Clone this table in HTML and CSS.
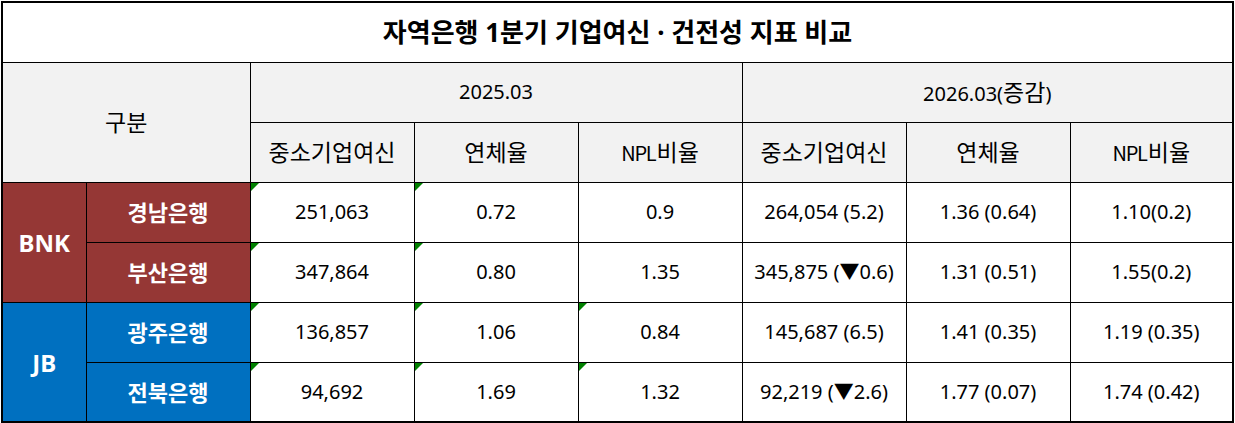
FILE: index.html
```html
<!DOCTYPE html>
<html lang="ko">
<head>
<meta charset="utf-8">
<link rel="stylesheet" href="styles.css">
</head>
<body>
<table class="sheet">
  <colgroup>
    <col class="c-grp"><col class="c-bank">
    <col class="c-val"><col class="c-val"><col class="c-val">
    <col class="c-val"><col class="c-val6"><col class="c-val7">
  </colgroup>
  <tr class="row">
    <td class="title" colspan="8">자역은행 1분기 기업여신 · 건전성 지표 비교</td>
  </tr>
  <tr class="row">
    <td class="head ko" colspan="2" rowspan="2">구분</td>
    <td class="head" colspan="3">2025.03</td>
    <td class="head" colspan="3">2026.03(<span class="ko">증감</span>)</td>
  </tr>
  <tr class="row">
    <td class="head ko">중소기업여신</td>
    <td class="head ko">연체율</td>
    <td class="head"><span class="npl">NPL</span><span class="ko">비율</span></td>
    <td class="head ko">중소기업여신</td>
    <td class="head ko">연체율</td>
    <td class="head"><span class="npl">NPL</span><span class="ko">비율</span></td>
  </tr>
  <tr class="row">
    <td class="grp bnk" rowspan="2">BNK</td>
    <td class="bank bnk">경남은행</td>
    <td class="tri">251,063</td>
    <td class="tri">0.72</td>
    <td>0.9</td>
    <td>264,054 (5.2)</td>
    <td>1.36 (0.64)</td>
    <td>1.10(0.2)</td>
  </tr>
  <tr class="row">
    <td class="bank bnk">부산은행</td>
    <td class="tri">347,864</td>
    <td class="tri">0.80</td>
    <td>1.35</td>
    <td>345,875 (▼0.6)</td>
    <td>1.31 (0.51)</td>
    <td>1.55(0.2)</td>
  </tr>
  <tr class="row">
    <td class="grp jb" rowspan="2">JB</td>
    <td class="bank jb">광주은행</td>
    <td class="tri">136,857</td>
    <td class="tri">1.06</td>
    <td class="tri">0.84</td>
    <td>145,687 (6.5)</td>
    <td>1.41 (0.35)</td>
    <td>1.19 (0.35)</td>
  </tr>
  <tr class="row">
    <td class="bank jb">전북은행</td>
    <td class="tri">94,692</td>
    <td class="tri">1.69</td>
    <td class="tri">1.32</td>
    <td>92,219 (▼2.6)</td>
    <td>1.77 (0.07)</td>
    <td>1.74 (0.42)</td>
  </tr>
</table>
</body>
</html>
```
FILE: styles.css
```css
html, body {
  margin: 0;
  padding: 0;
  background: #ffffff;
}
body {
  padding: 1px 0 0 1px;
  font-family: "Noto Sans", "Noto Sans CJK KR", sans-serif;
  color: #000;
}
.sheet {
  border-collapse: collapse;
  table-layout: fixed;
  width: 1231px;
  border: 2px solid #000;
}
.c-grp { width: 84px; }
.c-bank { width: 164px; }
.c-val { width: 164px; }
.c-val6 { width: 164px; }
.c-val7 { width: 163px; }
.row { height: 60px; }
td {
  border: 1px solid #000;
  padding: 0;
  text-align: center;
  vertical-align: middle;
  font-size: 20px;
  line-height: 1;
  position: relative;
  white-space: nowrap;
}
.title {
  font-weight: bold;
  font-size: 26px;
  background: #fff;
}
.head {
  background: #f2f2f2;
}
.ko {
  font-size: 23px;
}
.npl {
  font-family: "Noto Sans CJK KR", "Noto Sans", sans-serif;
  font-size: 20px;
  letter-spacing: -1.2px;
  margin-right: 1px;
}
.grp, .bank {
  color: #fff;
  font-weight: bold;
  font-size: 22px;
}
.grp {
  font-size: 24px;
  padding-top: 2px;
}
.bnk { background: #953735; }
.jb { background: #0070c0; }
.tri::before {
  content: "";
  position: absolute;
  left: 0;
  top: 0;
  width: 0;
  height: 0;
  border-top: 8px solid #008000;
  border-right: 8px solid transparent;
}
```
